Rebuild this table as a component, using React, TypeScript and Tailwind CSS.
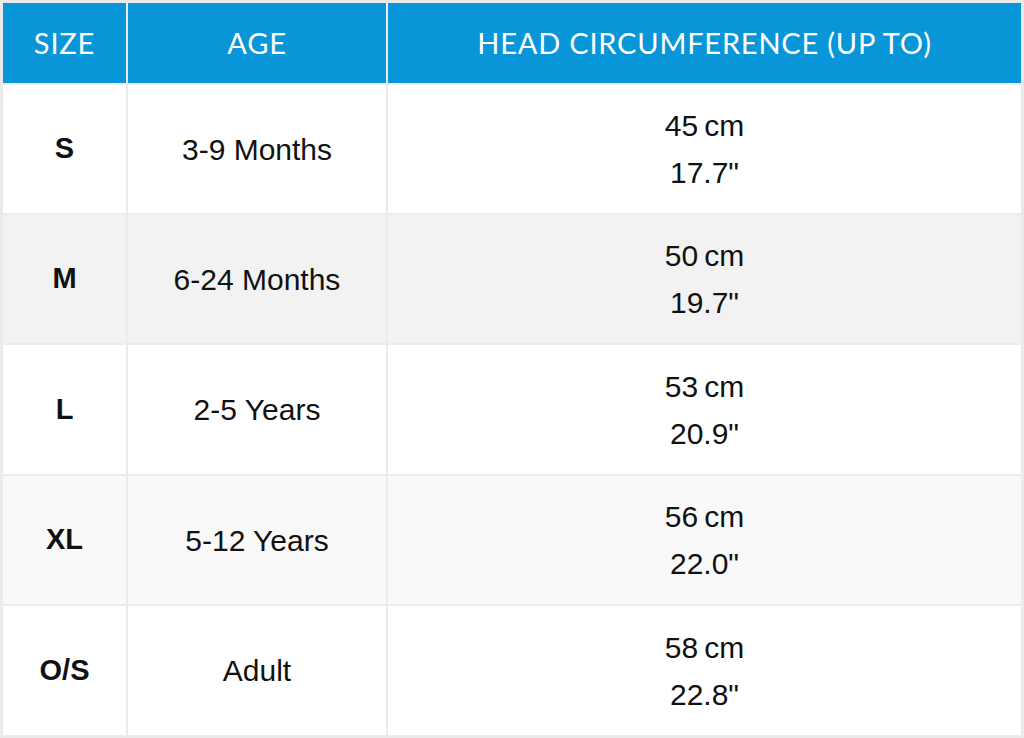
const rows = [
  { size: "S", age: "3-9 Months", cm: "45", inch: "17.7", bg: "bg-white", h: "h-[128px]" },
  { size: "M", age: "6-24 Months", cm: "50", inch: "19.7", bg: "bg-[#f2f2f2]", h: "h-[128px]" },
  { size: "L", age: "2-5 Years", cm: "53", inch: "20.9", bg: "bg-white", h: "h-[129px]" },
  { size: "XL", age: "5-12 Years", cm: "56", inch: "22.0", bg: "bg-[#f9f9f9]", h: "h-[128px]" },
  { size: "O/S", age: "Adult", cm: "58", inch: "22.8", bg: "bg-white", h: "h-[129px]" },
];

export default function App() {
  return (
    <div className="h-[738px] w-[1024px] bg-[#ebebeb] p-[3px]">
      <div className="grid grid-cols-[123px_258px_1fr] gap-[2px] text-[#111]">
        <div className="flex h-[80px] items-center justify-center bg-[#0896d8] font-['Lato',sans-serif] text-[29px] tracking-[0.8px] text-white">
          SIZE
        </div>
        <div className="flex h-[80px] items-center justify-center bg-[#0896d8] font-['Lato',sans-serif] text-[29px] tracking-[0.8px] text-white">
          AGE
        </div>
        <div className="flex h-[80px] items-center justify-center bg-[#0896d8] font-['Lato',sans-serif] text-[29px] tracking-[0.8px] text-white">
          HEAD CIRCUMFERENCE (UP TO)
        </div>

        {rows.map((row) => (
          <div key={row.size} className="contents font-['Liberation_Sans',Arial,sans-serif]">
            <div className={`flex ${row.h} items-center justify-center ${row.bg} text-[29px] font-bold`}>
              {row.size}
            </div>
            <div className={`flex ${row.h} items-center justify-center ${row.bg} text-[30px]`}>
              {row.age}
            </div>
            <div className={`flex ${row.h} flex-col items-center justify-center ${row.bg} text-[30px] leading-[47px]`}>
              <span>{row.cm}{"\u2009"}cm</span>
              <span>{row.inch}"</span>
            </div>
          </div>
        ))}
      </div>
    </div>
  );
}
